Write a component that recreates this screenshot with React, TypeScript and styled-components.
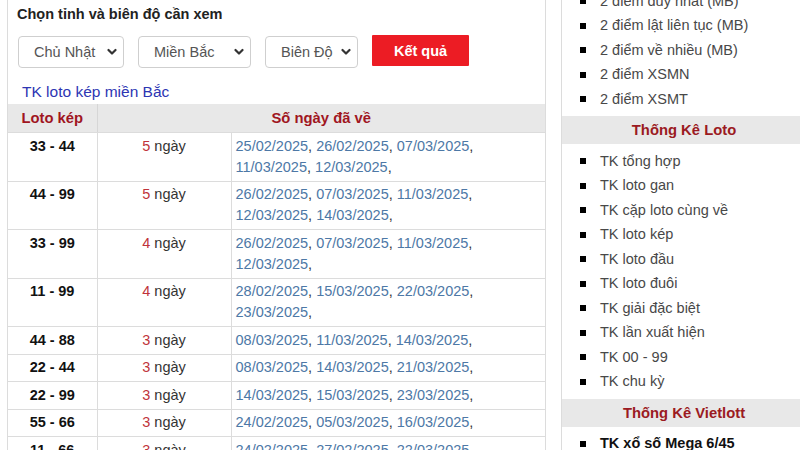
import React from "react";
import styled, { createGlobalStyle } from "styled-components";

const Global = createGlobalStyle`
  html, body { margin: 0; padding: 0; background: #fff; overflow: hidden; }
  body { font-family: "Liberation Sans", Arial, sans-serif; }
`;

const Page = styled.div`
  display: flex;
  align-items: flex-start;
  padding-left: 7px;
  width: 820px;
  height: 450px;
  overflow: hidden;
`;

const Main = styled.section`
  width: 537px;
  border-left: 1px solid #dcdcdc;
  border-right: 1px solid #dcdcdc;
  background: #fff;
  height: 470px;
`;

const Title = styled.h3`
  margin: 0;
  padding: 5px 0 0 9px;
  font-size: 14.5px;
  line-height: 18px;
  font-weight: bold;
  color: #222;
`;

const FormRow = styled.div`
  display: flex;
  gap: 14px;
  padding: 13px 0 0 10px;
  height: 32px;
  align-items: stretch;
`;

const SelectBox = styled.div<{ $w: number }>`
  width: ${(p) => p.$w}px;
  box-sizing: border-box;
  height: 32px;
  border: 1px solid #cfcfcf;
  border-radius: 4px;
  background: #fff;
  display: flex;
  align-items: center;
  justify-content: space-between;
  padding: 0 6px 0 15px;
  font-size: 14.5px;
  color: #555;
  white-space: nowrap;
`;

const Button = styled.button`
  width: 97px;
  height: 31px;
  margin-top: -1px;
  border: none;
  border-radius: 1px;
  background: #ec1c24;
  color: #fff;
  font-family: inherit;
  font-weight: bold;
  font-size: 14.5px;
  padding: 0;
`;

const LinkRow = styled.div`
  padding: 11px 0 0 14px;
  height: 25px;
  line-height: 25px;
`;

const Link = styled.a`
  font-size: 15.5px;
  color: #2d35b3;
  text-decoration: none;
`;

const Table = styled.table`
  width: 100%;
  border-collapse: collapse;
  table-layout: fixed;
  font-size: 14.5px;
`;

const Th = styled.th`
  background: #e8e8e8;
  color: #a0161f;
  font-weight: bold;
  font-size: 14.8px;
  height: 28px;
  padding: 0;
  border-left: 1px solid #d6d6d6;
  border-bottom: 1px solid #dcdcdc;
  text-align: center;
  &:first-child { border-left: none; }
`;

const Td = styled.td<{ $align?: string }>`
  vertical-align: top;
  padding: 2.75px 4px;
  line-height: 21px;
  border-top: 1px solid #dcdcdc;
  border-left: 1px solid #dcdcdc;
  text-align: ${(p) => p.$align || "left"};
  color: #333;
  &:first-child { border-left: none; }
`;

const Pair = styled.span`
  font-weight: bold;
  color: #111;
`;

const Count = styled.span`
  color: #c0333a;
`;

const DateLink = styled.span`
  color: #4d78a6;
`;

const Sidebar = styled.aside`
  margin-left: 15px;
  margin-top: -16px;
  width: 244px;
  border-left: 1px solid #dcdcdc;
  height: 490px;
`;

const List = styled.ul`
  list-style: none;
  margin: 0;
  padding: 4.75px 0;
`;

const Item = styled.li<{ $strong?: boolean }>`
  position: relative;
  height: 24.5px;
  line-height: 24.5px;
  padding-left: 38px;
  font-size: 14.5px;
  color: ${(p) => (p.$strong ? "#111" : "#484848")};
  font-weight: ${(p) => (p.$strong ? "bold" : "normal")};
  white-space: nowrap;
  &::before {
    content: "";
    position: absolute;
    left: 18px;
    top: 9.5px;
    width: 6px;
    height: 6px;
    background: #000;
  }
`;

const SideHead = styled.div`
  height: 28px;
  line-height: 28px;
  background: #e8e8e8;
  text-align: center;
  font-weight: bold;
  font-size: 14.8px;
  color: #9b1a22;
`;

const Chevron = () => (
  <svg width="10" height="8" viewBox="0 0 10 8">
    <polyline points="1.5,2 5,5.5 8.5,2" fill="none" stroke="#333" strokeWidth="2.2" strokeLinecap="round" strokeLinejoin="round" />
  </svg>
);

const rows: [string, number, string[]][] = [
  ["33 - 44", 5, ["25/02/2025", "26/02/2025", "07/03/2025", "11/03/2025", "12/03/2025"]],
  ["44 - 99", 5, ["26/02/2025", "07/03/2025", "11/03/2025", "12/03/2025", "14/03/2025"]],
  ["33 - 99", 4, ["26/02/2025", "07/03/2025", "11/03/2025", "12/03/2025"]],
  ["11 - 99", 4, ["28/02/2025", "15/03/2025", "22/03/2025", "23/03/2025"]],
  ["44 - 88", 3, ["08/03/2025", "11/03/2025", "14/03/2025"]],
  ["22 - 44", 3, ["08/03/2025", "14/03/2025", "21/03/2025"]],
  ["22 - 99", 3, ["14/03/2025", "15/03/2025", "23/03/2025"]],
  ["55 - 66", 3, ["24/02/2025", "05/03/2025", "16/03/2025"]],
  ["11 - 66", 3, ["24/02/2025", "27/02/2025", "22/03/2025"]],
];

const list1 = ["2 điểm duy nhất (MB)", "2 điểm lật liên tục (MB)", "2 điểm về nhiều (MB)", "2 điểm XSMN", "2 điểm XSMT"];
const list2 = [
  "TK tổng hợp",
  "TK loto gan",
  "TK cặp loto cùng về",
  "TK loto kép",
  "TK loto đầu",
  "TK loto đuôi",
  "TK giải đặc biệt",
  "TK lần xuất hiện",
  "TK 00 - 99",
  "TK chu kỳ",
];

export default function App() {
  return (
    <>
      <Global />
      <Page>
        <Main>
          <Title>Chọn tỉnh và biên độ cần xem</Title>
          <FormRow>
            <SelectBox $w={106}>
              <span>Chủ Nhật</span>
              <Chevron />
            </SelectBox>
            <SelectBox $w={113}>
              <span>Miền Bắc</span>
              <Chevron />
            </SelectBox>
            <SelectBox $w={93}>
              <span>Biên Độ</span>
              <Chevron />
            </SelectBox>
            <Button>Kết quả</Button>
          </FormRow>
          <LinkRow>
            <Link href="#">TK loto kép miền Bắc</Link>
          </LinkRow>
          <Table>
            <colgroup>
              <col style={{ width: 89 }} />
              <col style={{ width: 134 }} />
              <col />
            </colgroup>
            <thead>
              <tr>
                <Th>Loto kép</Th>
                <Th colSpan={2}>Số ngày đã về</Th>
              </tr>
            </thead>
            <tbody>
              {rows.map(([pair, n, dates]) => (
                <tr key={pair}>
                  <Td $align="center">
                    <Pair>{pair}</Pair>
                  </Td>
                  <Td $align="center">
                    <Count>{n}</Count> ngày
                  </Td>
                  <Td>
                    {dates.map((d, i) => (
                      <React.Fragment key={i}>
                        <DateLink>{d}</DateLink>,{" "}
                      </React.Fragment>
                    ))}
                  </Td>
                </tr>
              ))}
            </tbody>
          </Table>
        </Main>
        <Sidebar>
          <List>
            {list1.map((t) => (
              <Item key={t}>{t}</Item>
            ))}
          </List>
          <SideHead>Thống Kê Loto</SideHead>
          <List>
            {list2.map((t) => (
              <Item key={t}>{t}</Item>
            ))}
          </List>
          <SideHead>Thống Kê Vietlott</SideHead>
          <List>
            <Item $strong>TK xổ số Mega 6/45</Item>
          </List>
        </Sidebar>
      </Page>
    </>
  );
}
